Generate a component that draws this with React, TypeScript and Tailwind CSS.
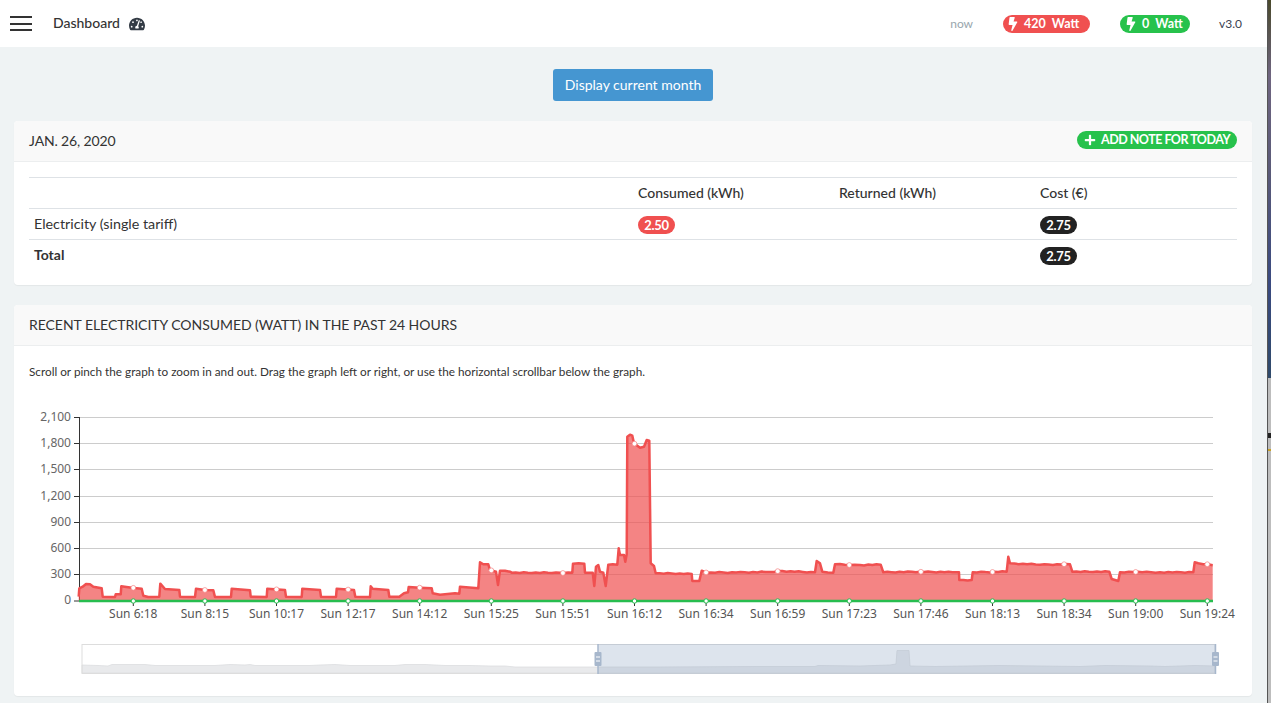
import React from 'react'
import { FaBolt, FaPlus, FaTachometerAlt } from 'react-icons/fa'

// page pixel coordinates, traced from the graph
const seriesA = [
  [236, 590], [238, 565], [248, 560], [258, 552], [270, 553], [280, 560], [305, 565], [308, 590], [345, 591], [347, 583], [362, 583], [364, 559],
  [395, 563], [425, 566], [430, 587], [445, 591], [478, 590], [481, 551], [495, 567], [538, 570], [540, 590], [585, 591], [588, 566], [615, 570],
  [640, 571], [645, 591], [693, 591], [695, 566], [750, 571], [752, 590], [800, 591], [802, 566], [855, 570], [858, 590], [905, 591], [907, 566],
  [960, 570], [963, 590], [1008, 591], [1010, 566], [1062, 570], [1066, 590], [1110, 591], [1112, 559], [1118, 566], [1165, 570], [1168, 590],
  [1198, 590], [1212, 580], [1224, 577], [1226, 561], [1260, 563],
].map(([x, y]) => [x / 3, 400 + y / 3])

const seriesB = [
  [35, 505], [38, 520], [60, 524], [105, 520], [118, 521], [120, 500], [175, 505], [180, 427], [190, 433], [205, 433], [210, 450], [228, 455],
  [234, 495], [240, 452], [270, 455], [275, 458], [420, 458], [457, 458], [459, 431], [493, 431], [495, 458], [518, 458], [523, 498], [528, 440],
  [535, 435], [540, 455], [550, 458], [557, 498], [565, 434], [592, 434], [596, 385], [600, 405], [612, 405], [616, 425], [620, 403], [622, 50],
  [630, 44], [637, 47], [642, 70], [660, 83], [672, 80], [680, 60], [688, 62], [692, 430], [702, 438], [707, 460], [815, 462], [817, 483], [838, 483],
  [845, 452], [860, 458], [1050, 456], [1075, 453], [1185, 457], [1190, 423], [1200, 430], [1207, 455], [1240, 458], [1245, 433], [1260, 432],
].map(([x, y]) => [420 + x / 3, 420 + y / 3])

const seriesC = [
  [28, 135], [60, 135], [122, 134], [130, 157], [240, 155], [350, 157], [357, 157], [358, 180], [395, 180], [398, 157], [500, 155], [505, 110],
  [510, 130], [600, 134], [690, 133], [697, 155], [808, 155], [815, 177], [835, 183], [840, 157], [880, 156], [960, 157], [1060, 157], [1064, 127],
  [1075, 130], [1118, 136],
].map(([x, y]) => [840 + x / 3, 520 + y / 3])

// the long flat stretches after 15:25 have a small jitter in the reference
const withJitter = (raw: number[][]) => {
  const out: number[][] = []
  raw.forEach(([x, y], i) => {
    const prev = raw[i - 1]
    if (prev && x > 490 && x - prev[0] > 8) {
      const steps = Math.floor((x - prev[0]) / 4)
      for (let s = 1; s < steps; s++) {
        const t = s / steps
        const noise = ((s * 7 + i * 3) % 5) * 0.22 - 0.44
        out.push([prev[0] + (x - prev[0]) * t, prev[1] + (y - prev[1]) * t + noise])
      }
    }
    out.push([x, y])
  })
  return out
}

const points = withJitter([...seriesA, ...seriesB, ...seriesC])
const baseY = 601
const linePath = points.map(([x, y], i) => `${i === 0 ? 'M' : 'L'}${x.toFixed(1)} ${y.toFixed(1)}`).join(' ')
const areaPath = `${linePath} L${points[points.length - 1][0].toFixed(1)} ${baseY} L${points[0][0].toFixed(1)} ${baseY} Z`

const yAt = (x: number) => {
  for (let i = 1; i < points.length; i++) {
    if (points[i][0] >= x) {
      const [x0, y0] = points[i - 1]
      const [x1, y1] = points[i]
      return y0 + ((y1 - y0) * (x - x0)) / Math.max(x1 - x0, 0.01)
    }
  }
  return points[points.length - 1][1]
}

const yAxis = [
  { label: '2,100', y: 417.5 },
  { label: '1,800', y: 443.5 },
  { label: '1,500', y: 469.5 },
  { label: '1,200', y: 496.5 },
  { label: '900', y: 522.5 },
  { label: '600', y: 548.5 },
  { label: '300', y: 574.5 },
  { label: '0', y: 601 },
]
const xLabels = ['Sun 6:18', 'Sun 8:15', 'Sun 10:17', 'Sun 12:17', 'Sun 14:12', 'Sun 15:25', 'Sun 15:51', 'Sun 16:12', 'Sun 16:34', 'Sun 16:59', 'Sun 17:23', 'Sun 17:46', 'Sun 18:13', 'Sun 18:34', 'Sun 19:00', 'Sun 19:24']

const miniPath = 'M82 665 L98 665.5 L108 666 L112 664.5 L145 664.5 L155 665.5 L215 665.5 L230 664.5 L245 665 L250 664.5 L255 665.5 L310 665.5 L320 665 L335 664.5 L350 665.5 L395 665.5 L405 664.5 L425 664.5 L445 665.5 L470 665.5 L490 666 L505 666 L515 667 L530 667 L598 667 L660 667 L760 666.5 L815 666.5 L818 665.5 L860 666 L890 665 L896 664 L897 650.5 L909 650.5 L910 666 L935 666.5 L1000 665.5 L1040 666 L1080 666.5 L1105 665.5 L1150 666 L1165 666.5 L1195 665.5 L1215 666 L1215 673 L82 673 Z'

const Graph = () => {
  return (
    <svg viewBox="14 400 1238 296" className="block w-[1238px] h-[296px]">
      {yAxis.map(({ label, y }) => (
        <g key={label}>
          {label !== '0' && <line x1="79" x2="1213" y1={y} y2={y} stroke="#cccccc" strokeWidth="1" />}
          <line x1="74" x2="79" y1={y} y2={y} stroke="#333333" strokeWidth="1" />
          <text x="71" y={y + 3} textAnchor="end" fontSize="12" fill="#666666" fontFamily="'Noto Sans', sans-serif">{label}</text>
        </g>
      ))}
      <line x1="79.5" x2="79.5" y1="417" y2="601" stroke="#333333" strokeWidth="1" />
      <path d={areaPath} fill="#f05050" fillOpacity="0.7" />
      <path d={linePath} fill="none" stroke="#f05050" strokeWidth="2.5" strokeLinejoin="round" />
      <line x1="79" x2="1213" y1="601" y2="601" stroke="#27bd4f" strokeWidth="2.5" />
      {xLabels.map((label, i) => {
        const x = 133.3 + i * 71.6
        return (
          <g key={label}>
            <line x1={x} x2={x} y1="601" y2="606" stroke="#333333" strokeWidth="1" />
            <circle cx={x} cy={yAt(x)} r="2.4" fill="#ffffff" stroke="#f58383" strokeWidth="0.7" />
            <circle cx={x} cy="601" r="2.2" fill="#ffffff" stroke="#27bd4f" strokeWidth="1" />
            <text x={x} y="618" textAnchor="middle" fontSize="12" fill="#555555" fontFamily="'Noto Sans', sans-serif">{label}</text>
          </g>
        )
      })}
      <path d={miniPath} fill="#e9eaec" stroke="#dcdde0" strokeWidth="0.8" />
      <rect x="82" y="644.5" width="1133" height="29" fill="none" stroke="#dddddd" strokeWidth="1" />
      <rect x="598" y="644" width="617" height="30" fill="#8fa5c4" fillOpacity="0.3" />
      <line x1="598" x2="598" y1="644" y2="674" stroke="#a7b7cc" strokeWidth="1.5" />
      <line x1="1215.5" x2="1215.5" y1="644" y2="674" stroke="#a7b7cc" strokeWidth="1.5" />
      {[598, 1215.5].map((x) => (
        <g key={x}>
          <rect x={x - 3.5} y="652" width="7" height="14" rx="1" fill="#a7b7cc" />
          <rect x={x - 2} y="656.5" width="4" height="1" fill="#ffffff" />
          <rect x={x - 2} y="660.5" width="4" height="1" fill="#ffffff" />
        </g>
      ))}
    </svg>
  )
}

const Pill = ({ color, children, className }: { color: string; children: React.ReactNode; className: string }) => (
  <span className={`inline-flex items-center h-[18px] rounded-full text-white font-bold ${color} ${className}`}>{children}</span>
)

const App = () => {
  return (
    <div className="flex w-[1271px] h-[703px] overflow-hidden font-['Lato',sans-serif] text-[#333333]">
      <div className="w-[1267px] h-full bg-[#eff3f4]">
        <header className="flex items-center h-[47px] bg-white pl-[10px] pr-[25px]">
          <div className="flex flex-col gap-[4.5px] w-[22px]">
            <span className="block h-[2px] bg-[#333333]" />
            <span className="block h-[2px] bg-[#333333]" />
            <span className="block h-[2px] bg-[#333333]" />
          </div>
          <span className="ml-[21px] -mt-px text-sm font-medium text-[#333333]">Dashboard</span>
          <FaTachometerAlt className="ml-[9px] text-[16px] text-[#333b45]" />
          <span className="ml-auto text-xs text-[#98a6ad]">now</span>
          <Pill color="bg-[#f05050]" className="ml-[30px] w-[87px] pl-[3px] gap-[4px] text-[12.5px]">
            <FaBolt className="text-[14px]" />
            <span className="whitespace-pre pt-[2px]">420  Watt</span>
          </Pill>
          <Pill color="bg-[#27c24c]" className="ml-[30px] w-[70px] pl-[4px] gap-[4px] text-[12.5px]">
            <FaBolt className="text-[14px]" />
            <span className="whitespace-pre pt-[2px]">0  Watt</span>
          </Pill>
          <span className="ml-[29px] text-xs text-[#3a3f51]">v3.0</span>
        </header>

        <div className="flex justify-center pt-[22px] pr-px">
          <button className="w-[160px] h-[32px] rounded-[3px] bg-[#4596d1] text-white text-sm">Display current month</button>
        </div>

        <section className="ml-[14px] mr-[15px] mt-[20px] h-[164px] rounded-[4px] bg-white shadow-[0_1px_1px_rgba(0,0,0,0.05)]">
          <div className="flex items-center justify-between h-[41px] px-[15px] rounded-t-[4px] bg-[#f9f9f9] border-b border-[#eceeef]">
            <h2 className="text-sm uppercase tracking-[-0.15px]">Jan. 26, 2020</h2>
            <Pill color="bg-[#27c24c]" className="w-[160px] pl-[7px] gap-[5px] text-[12.5px] tracking-[-0.5px] uppercase -mt-[2px]">
              <FaPlus className="text-[12px]" />
              <span>Add note for today</span>
            </Pill>
          </div>
          <div className="px-[15px] pt-[15px]">
            <table className="w-[1208px] table-fixed text-sm">
              <colgroup>
                <col className="w-[604px]" />
                <col className="w-[201px]" />
                <col className="w-[201px]" />
                <col className="w-[202px]" />
              </colgroup>
              <thead>
                <tr className="h-[31px] border-t border-[#dee2e6]">
                  <th />
                  <th className="px-[5px] text-left font-medium">Consumed (kWh)</th>
                  <th className="px-[5px] text-left font-medium">Returned (kWh)</th>
                  <th className="px-[5px] text-left font-medium">Cost (€)</th>
                </tr>
              </thead>
              <tbody>
                <tr className="h-[31px] border-t border-[#dee2e6]">
                  <td className="px-[5px] text-[14.3px]">Electricity (single tariff)</td>
                  <td className="px-[5px]"><Pill color="bg-[#f05050]" className="w-[37px] justify-center text-[13px] tracking-[-0.3px] align-middle">2.50</Pill></td>
                  <td />
                  <td className="px-[5px]"><Pill color="bg-[#222222]" className="w-[37px] justify-center text-[13px] tracking-[-0.3px] align-middle">2.75</Pill></td>
                </tr>
                <tr className="h-[31px] border-t border-[#dee2e6]">
                  <td className="px-[5px] font-bold">Total</td>
                  <td />
                  <td />
                  <td className="px-[5px]"><Pill color="bg-[#222222]" className="w-[37px] justify-center text-[13px] tracking-[-0.3px] align-middle">2.75</Pill></td>
                </tr>
              </tbody>
            </table>
          </div>
        </section>

        <section className="ml-[14px] mr-[15px] mt-[20px] h-[391px] rounded-[4px] bg-white shadow-[0_1px_1px_rgba(0,0,0,0.05)]">
          <div className="flex items-center h-[41px] px-[15px] rounded-t-[4px] bg-[#f9f9f9] border-b border-[#eceeef]">
            <h2 className="text-sm uppercase tracking-[-0.04px]">Recent electricity consumed (Watt) in the past 24 hours</h2>
          </div>
          <p className="h-[54px] px-[15px] pt-[18px] text-[11.75px] leading-[16px]">
            Scroll or pinch the graph to zoom in and out. Drag the graph left or right, or use the horizontal scrollbar below the graph.
          </p>
          <Graph />
        </section>
      </div>

      <div className="flex flex-col w-[4px] h-full border-l border-[#555555]">
        <div className="h-[378px] bg-[linear-gradient(180deg,#4a4a2c_0%,#6f6580_20%,#5a5a78_45%,#3a4a80_75%,#2f4a6a_100%)]" />
        <div className="flex-1 bg-[#bdbdbd]">
          <div className="mt-[55px] h-[5px] bg-[#222222]" />
          <div className="mt-[11px] h-[2px] bg-[#c9a227]" />
        </div>
      </div>
    </div>
  )
}

export default App
